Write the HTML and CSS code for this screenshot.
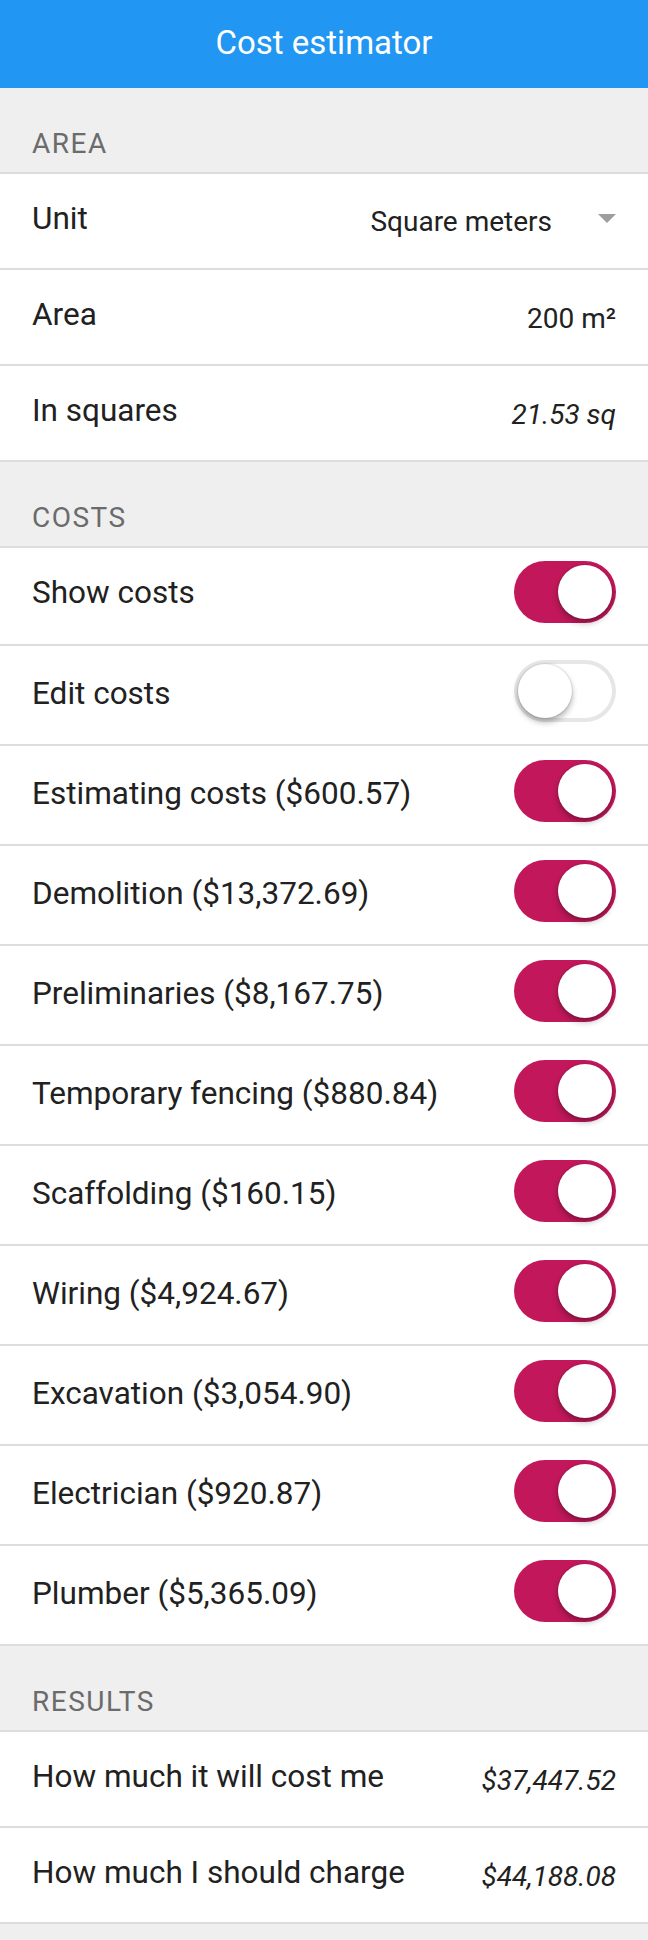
FILE: index.html
```html
<!DOCTYPE html>
<html lang="en">
<head>
<meta charset="utf-8">
<title>Cost estimator</title>
<link rel="stylesheet" href="styles.css">
</head>
<body>
<header class="toolbar"><div class="toolbar-title">Cost estimator</div></header>

<section class="group">
  <div class="list-header">AREA</div>
  <ul class="list">
    <li class="item item-static">
      <span class="label">Unit</span>
      <span class="select"><span class="select-text">Square meters</span><span class="caret"></span></span>
    </li>
    <li class="item item-static">
      <span class="label">Area</span>
      <span class="value">200 m²</span>
    </li>
    <li class="item item-static">
      <span class="label">In squares</span>
      <span class="value italic">21.53 sq</span>
    </li>
  </ul>
</section>

<section class="group">
  <div class="list-header">COSTS</div>
  <ul class="list">
    <li class="item item-toggle item-first"><span class="label">Show costs</span><span class="switch on"><span class="knob"></span></span></li>
    <li class="item item-toggle"><span class="label">Edit costs</span><span class="switch"><span class="knob"></span></span></li>
    <li class="item item-toggle"><span class="label">Estimating costs ($600.57)</span><span class="switch on"><span class="knob"></span></span></li>
    <li class="item item-toggle"><span class="label">Demolition ($13,372.69)</span><span class="switch on"><span class="knob"></span></span></li>
    <li class="item item-toggle"><span class="label">Preliminaries ($8,167.75)</span><span class="switch on"><span class="knob"></span></span></li>
    <li class="item item-toggle"><span class="label">Temporary fencing ($880.84)</span><span class="switch on"><span class="knob"></span></span></li>
    <li class="item item-toggle"><span class="label">Scaffolding ($160.15)</span><span class="switch on"><span class="knob"></span></span></li>
    <li class="item item-toggle"><span class="label">Wiring ($4,924.67)</span><span class="switch on"><span class="knob"></span></span></li>
    <li class="item item-toggle"><span class="label">Excavation ($3,054.90)</span><span class="switch on"><span class="knob"></span></span></li>
    <li class="item item-toggle"><span class="label">Electrician ($920.87)</span><span class="switch on"><span class="knob"></span></span></li>
    <li class="item item-toggle"><span class="label">Plumber ($5,365.09)</span><span class="switch on"><span class="knob"></span></span></li>
  </ul>
</section>

<section class="group">
  <div class="list-header">RESULTS</div>
  <ul class="list">
    <li class="item item-static">
      <span class="label">How much it will cost me</span>
      <span class="value italic">$37,447.52</span>
    </li>
    <li class="item item-static">
      <span class="label">How much I should charge</span>
      <span class="value italic">$44,188.08</span>
    </li>
  </ul>
</section>
</body>
</html>
```

FILE: styles.css
```css
html, body {
  margin: 0;
  padding: 0;
  background: #efefef;
  font-family: Roboto, "Liberation Sans", Arial, sans-serif;
  color: #212121;
}

.toolbar {
  height: 88px;
  box-sizing: border-box;
  padding-top: 26px;
  background: #2196f3;
  color: #ffffff;
  text-align: center;
  font-size: 33px;
  line-height: 33px;
}

.list-header {
  height: 84px;
  box-sizing: border-box;
  padding: 42px 32px 0;
  font-size: 28px;
  line-height: 28px;
  letter-spacing: 1.5px;
  color: #6b6b6b;
}

.list {
  list-style: none;
  margin: 0;
  padding: 0;
  background: #ffffff;
  border-top: 2px solid #dddddd;
}

.item {
  display: flex;
  justify-content: space-between;
  box-sizing: border-box;
  padding: 0 32px;
  border-bottom: 2px solid #dddddd;
  background: #ffffff;
}

.label {
  font-size: 31.5px;
  line-height: 32px;
  white-space: nowrap;
}

.item-static {
  height: 96px;
  align-items: flex-start;
}

.item-static .label {
  margin-top: 29px;
}

.value {
  font-size: 28px;
  line-height: 28px;
  margin-top: 35px;
}

.italic {
  font-style: italic;
}

.select {
  display: flex;
  align-items: flex-start;
}

.select-text {
  font-size: 28px;
  line-height: 28px;
  margin-top: 34px;
}

.caret {
  width: 0;
  height: 0;
  margin-top: 40px;
  margin-left: 46px;
  border-left: 9.5px solid transparent;
  border-right: 9.5px solid transparent;
  border-top: 9.5px solid #9e9e9e;
}

.item-toggle {
  height: 100px;
  align-items: center;
  padding-bottom: 8px;
}

.item-toggle .label {
  margin-top: 6px;
}

.item-first {
  height: 98px;
}

.item-first .label {
  margin-top: 2px;
}

.switch {
  position: relative;
  flex: none;
  width: 102px;
  height: 62px;
  border-radius: 31px;
  background: #ffffff;
  box-shadow: inset 0 0 0 4px #e6e6e6;
}

.switch.on {
  background: #c2185b;
  box-shadow: none;
}

.knob {
  position: absolute;
  top: 4px;
  left: 4px;
  width: 54px;
  height: 54px;
  border-radius: 50%;
  background: #ffffff;
  box-shadow: 0 4px 6px rgba(0, 0, 0, 0.3), 0 0 2px rgba(0, 0, 0, 0.25);
}

.switch.on .knob {
  left: 44px;
}
```
